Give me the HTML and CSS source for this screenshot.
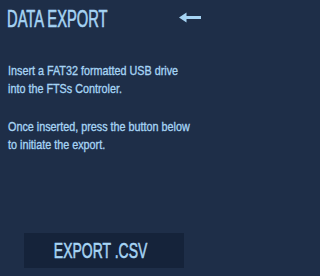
FILE: index.html
```html
<!DOCTYPE html>
<html>
<head>
<meta charset="utf-8">
<link rel="stylesheet" href="styles.css">
</head>
<body>
<div class="screen">
  <header class="top">
    <h1 class="title"><span class="squeeze-title">DATA EXPORT</span></h1>
    <svg class="back" width="22" height="11" viewBox="0 0 22 11" aria-label="Back">
      <path d="M0 5.5 L7.5 0.5 L7.5 4 L22 4 L22 7 L7.5 7 L7.5 10.5 Z" fill="#a6d4f4"/>
    </svg>
  </header>
  <div class="copy">
    <p>Insert a FAT32 formatted USB drive into the FTSs Controler.</p>
    <p>Once inserted, press the button below to initiate the export.</p>
  </div>
  <button class="export"><span class="squeeze-btn">EXPORT .CSV</span></button>
</div>
</body>
</html>
```
FILE: styles.css
```css
html, body {
  margin: 0;
  padding: 0;
}
body {
  background: #1e2e48;
  font-family: "Liberation Sans", Arial, sans-serif;
  color: #a6d4f4;
}
.screen {
  width: 208px;
  height: 276px;
  display: flex;
  flex-direction: column;
  background: #1e2e48;
  box-sizing: border-box;
  padding-bottom: 8px;
  overflow: hidden;
}
.top {
  display: flex;
  justify-content: space-between;
  align-items: flex-start;
  padding: 7px 7px 0 7px;
  height: 24px;
}
.title {
  margin: 0;
  font-size: 23px;
  line-height: 24px;
  font-weight: normal;
  white-space: nowrap;
  -webkit-text-stroke: 0.6px #a6d4f4;
}
.squeeze-title {
  display: inline-block;
  transform: scaleX(0.64);
  transform-origin: left center;
}
.back {
  display: block;
  margin-top: 5px;
}
.copy {
  width: 225px;
  margin: 31px 0 0 8px;
  font-size: 13px;
  line-height: 18px;
  -webkit-text-stroke: 0.35px #a6d4f4;
  transform: scaleX(0.83);
  transform-origin: left top;
}
.copy p {
  margin: 0 0 20px 0;
}
.export {
  margin: auto 24px 0 24px;
  height: 35px;
  border: none;
  background: #15233a;
  color: #a6d4f4;
  font-family: "Liberation Sans", Arial, sans-serif;
  font-size: 22px;
  line-height: 35px;
  padding: 0 6px 0 0;
  text-align: center;
  -webkit-text-stroke: 0.6px #a6d4f4;
}
.squeeze-btn {
  display: inline-block;
  transform: scaleX(0.635);
  transform-origin: center center;
}
```
